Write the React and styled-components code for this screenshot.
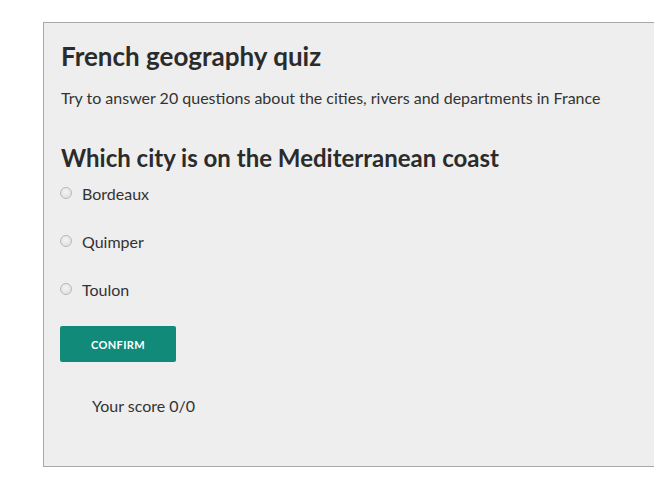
import React, { useState } from 'react';
import styled, { createGlobalStyle } from 'styled-components';

const GlobalStyle = createGlobalStyle`
  html, body {
    margin: 0;
    padding: 0;
    background: #ffffff;
    overflow: hidden;
  }
  body {
    font-family: Lato, "Open Sans", sans-serif;
    color: #333333;
  }
`;

const Page = styled.div`
  padding: 22px 0 0 43px;
`;

const Panel = styled.div`
  width: 660px;
  box-sizing: border-box;
  background: #eeeeee;
  border: 1px solid #a9a9a9;
  padding: 17px 17px 50px 17px;
`;

const Title = styled.h1`
  margin: 0;
  font-size: 26px;
  line-height: 32px;
  font-weight: 700;
  color: #2b2b2b;
`;

const Intro = styled.p`
  margin: 16px 0 0;
  font-size: 16px;
  line-height: 20px;
`;

const Question = styled.h2`
  margin: 35px 0 0;
  font-size: 24px;
  line-height: 30px;
  font-weight: 700;
  color: #2b2b2b;
`;

const Options = styled.div`
  display: flex;
  flex-direction: column;
  gap: 28px;
  margin-top: 11px;
`;

const Option = styled.label`
  display: flex;
  align-items: center;
  gap: 10px;
  font-size: 16px;
  line-height: 20px;
  cursor: pointer;
`;

const Radio = styled.input.attrs({ type: 'radio' })`
  appearance: none;
  margin: 0 0 2px -1px;
  width: 12px;
  height: 12px;
  border-radius: 50%;
  border: 1px solid #b8b8b8;
  background: radial-gradient(circle at 50% 40%, #f4f4f4 0%, #dcdcdc 100%);
  box-sizing: border-box;

  &:checked {
    background: radial-gradient(circle, #333 0 3px, #eaeaea 3.5px);
  }
`;

const ConfirmButton = styled.button`
  display: block;
  margin-top: 26px;
  margin-left: -1px;
  width: 116px;
  height: 36px;
  border: none;
  border-radius: 2px;
  background: #118a7a;
  color: #ffffff;
  font-family: Lato, sans-serif;
  font-size: 11px;
  font-weight: 700;
  letter-spacing: 0.4px;
  text-transform: uppercase;
  cursor: pointer;
`;

const Score = styled.div`
  margin-top: 34px;
  padding-left: 31px;
  font-size: 16px;
  line-height: 20px;
`;

const cities = ['Bordeaux', 'Quimper', 'Toulon'];

const App = () => {
  const [choice, setChoice] = useState(null);

  return (
    <Page>
      <GlobalStyle />
      <Panel>
        <Title>French geography quiz</Title>
        <Intro>Try to answer 20 questions about the cities, rivers and departments in France</Intro>
        <Question>Which city is on the Mediterranean coast</Question>
        <Options>
          {cities.map((city) => (
            <Option key={city}>
              <Radio
                name="city"
                value={city}
                checked={choice === city}
                onChange={() => setChoice(city)}
              />
              {city}
            </Option>
          ))}
        </Options>
        <ConfirmButton>Confirm</ConfirmButton>
        <Score>Your score 0/0</Score>
      </Panel>
    </Page>
  );
};

export default App;
